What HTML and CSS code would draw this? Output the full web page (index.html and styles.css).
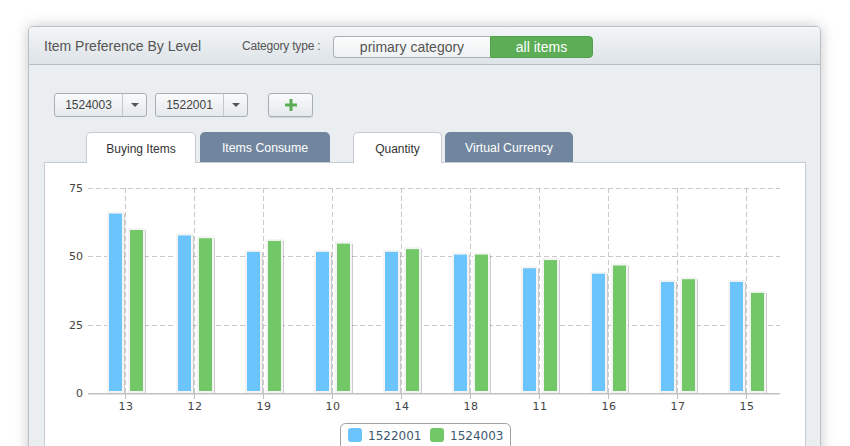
FILE: index.html
```html
<!DOCTYPE html>
<html>
<head>
<meta charset="utf-8">
<link rel="stylesheet" href="styles.css">
</head>
<body>
<div class="panel">
  <div class="header">
    <div class="title">Item Preference By Level</div>
    <div class="cat-label">Category type&nbsp;:</div>
    <div class="seg">
      <div class="seg-btn">primary category</div>
      <div class="seg-btn active">all items</div>
    </div>
  </div>
  <div class="body">
    <div class="controls">
      <div class="dropdown"><span class="dd-text">1524003</span><span class="dd-arrow"></span></div>
      <div class="dropdown"><span class="dd-text">1522001</span><span class="dd-arrow"></span></div>
      <div class="add-btn">
        <svg width="14" height="14" viewBox="0 0 14 14"><rect x="5.5" y="1" width="3" height="12" fill="#5aad55"/><rect x="1" y="5.5" width="12" height="3" fill="#5aad55"/></svg>
      </div>
    </div>
    <div class="tabs">
      <div class="tab on">Buying Items</div>
      <div class="tab off">Items Consume</div>
      <div class="tab on second">Quantity</div>
      <div class="tab off">Virtual Currency</div>
    </div>
    <div class="chart-box">
      <svg class="chart" width="760" height="300" viewBox="0 0 760 300">
        <g stroke="#c8c8c8" stroke-width="1" stroke-dasharray="5,3" fill="none">
          <line x1="43" y1="25.5" x2="735" y2="25.5"/>
          <line x1="43" y1="93.5" x2="735" y2="93.5"/>
          <line x1="43" y1="162.5" x2="735" y2="162.5"/>
          <line x1="80.5" y1="25" x2="80.5" y2="230"/>
          <line x1="149.5" y1="25" x2="149.5" y2="230"/>
          <line x1="218.5" y1="25" x2="218.5" y2="230"/>
          <line x1="287.5" y1="25" x2="287.5" y2="230"/>
          <line x1="356.5" y1="25" x2="356.5" y2="230"/>
          <line x1="425.5" y1="25" x2="425.5" y2="230"/>
          <line x1="494.5" y1="25" x2="494.5" y2="230"/>
          <line x1="563.5" y1="25" x2="563.5" y2="230"/>
          <line x1="632.5" y1="25" x2="632.5" y2="230"/>
          <line x1="701.5" y1="25" x2="701.5" y2="230"/>
        </g>
        <g id="bars"></g>
        <line x1="43" y1="230.5" x2="735" y2="230.5" stroke="#c0c0c0" stroke-width="1"/>
        <line x1="43" y1="231.5" x2="735" y2="231.5" stroke="#e0e0e0" stroke-width="1"/>
        <g stroke="#c0c0c0" stroke-width="1">
          <line x1="80.5" y1="231" x2="80.5" y2="236"/>
          <line x1="149.5" y1="231" x2="149.5" y2="236"/>
          <line x1="218.5" y1="231" x2="218.5" y2="236"/>
          <line x1="287.5" y1="231" x2="287.5" y2="236"/>
          <line x1="356.5" y1="231" x2="356.5" y2="236"/>
          <line x1="425.5" y1="231" x2="425.5" y2="236"/>
          <line x1="494.5" y1="231" x2="494.5" y2="236"/>
          <line x1="563.5" y1="231" x2="563.5" y2="236"/>
          <line x1="632.5" y1="231" x2="632.5" y2="236"/>
          <line x1="701.5" y1="231" x2="701.5" y2="236"/>
        </g>
        <g class="ylab" text-anchor="end">
          <text x="38" y="29">75</text>
          <text x="38" y="97">50</text>
          <text x="38" y="166">25</text>
          <text x="38" y="234">0</text>
        </g>
        <g class="xlab" text-anchor="middle">
          <text x="81" y="247">13</text>
          <text x="150" y="247">12</text>
          <text x="219" y="247">19</text>
          <text x="288" y="247">10</text>
          <text x="357" y="247">14</text>
          <text x="426" y="247">18</text>
          <text x="495" y="247">11</text>
          <text x="564" y="247">16</text>
          <text x="633" y="247">17</text>
          <text x="702" y="247">15</text>
        </g>
        <rect x="295.5" y="260.5" width="170" height="40" rx="5" fill="#fff" stroke="#a0a0a0"/>
        <rect x="303" y="265" width="14" height="14" rx="3" fill="#6cc4fc"/>
        <text class="leg" x="323" y="277">1522001</text>
        <rect x="385" y="265" width="14" height="14" rx="3" fill="#72c866"/>
        <text class="leg" x="405" y="277">1524003</text>
      </svg>
    </div>
  </div>
</div>
<script src="chart.js"></script>
</body>
</html>
```
FILE: chart.js
```js
(function(){
  var data=[[66,60],[58,57],[52,56],[52,55],[52,53],[51,51],[46,49],[44,47],[41,42],[41,37]];
  var g=document.getElementById('bars');
  var ns='http://www.w3.org/2000/svg';
  var base=230, scale=205/75;
  function bar(x,v,color){
    var h=v*scale, y=base-h;
    var s=document.createElementNS(ns,'rect');
    s.setAttribute('x',x+2);s.setAttribute('y',y+1);s.setAttribute('width',16);s.setAttribute('height',h-1);
    s.setAttribute('fill','rgba(0,0,0,0.2)');g.appendChild(s);
    var r=document.createElementNS(ns,'rect');
    r.setAttribute('x',x+1);r.setAttribute('y',y);r.setAttribute('width',15);r.setAttribute('height',h-1);
    r.setAttribute('fill',color);r.setAttribute('stroke','#f4f4f4');r.setAttribute('stroke-width','2');
    g.appendChild(r);
  }
  for(var i=0;i<data.length;i++){
    var c=80+69*i;
    bar(c-18,data[i][0],'#6cc4fc');
    bar(c+3,data[i][1],'#72c866');
  }
})();
```
FILE: styles.css
```css
html, body { margin: 0; padding: 0; background: #fff; }
body { font-family: "Liberation Sans", Arial, sans-serif; }
.panel {
  margin: 26px 0 0 28px;
  width: 791px;
  height: 460px;
  border: 1px solid #b9c0c7;
  border-radius: 5px;
  background: #eaeef1;
  box-shadow: 0 0 14px rgba(0,0,0,0.22);
  overflow: hidden;
}
.header {
  height: 36px;
  border-bottom: 1px solid #b5bdc5;
  background: linear-gradient(#f4f6f8, #dde3e7);
  display: flex;
  align-items: center;
  padding-left: 15px;
  padding-top: 1px;
  box-sizing: content-box;
}
.title { font-size: 14px; color: #555; width: 198px; }
.cat-label { font-size: 12px; color: #555; letter-spacing: -0.2px; width: 91px; }
.seg { display: flex; height: 22px; margin-top: 1px; }
.seg-btn {
  font-size: 14px; color: #555; display: flex; align-items: center; justify-content: center;
  border: 1px solid #a9b0b7; border-right: none;
  background: linear-gradient(#fbfcfc, #eef1f3);
  width: 156px; border-radius: 4px 0 0 4px;
}
.seg-btn.active {
  background: #5cad56; color: #fff; border: 1px solid #53a04d;
  width: 101px; border-radius: 0 4px 4px 0;
}
.body { padding: 28px 14px 0 15px; }
.controls { display: flex; padding-left: 10px; height: 24px; }
.dropdown {
  width: 91px; height: 22px; border: 1px solid #a8afb6; border-radius: 3px;
  background: linear-gradient(#f9fafb, #e5e9ec);
  display: flex; align-items: center; margin-right: 8px; font-size: 12px; color: #444;
}
.dd-text { width: 67px; text-align: center; border-right: 1px solid #c2c8cd; height: 22px; line-height: 22px; }
.dd-arrow {
  width: 0; height: 0; margin-left: 8px;
  border-left: 4px solid transparent; border-right: 4px solid transparent; border-top: 4px solid #555;
}
.add-btn {
  width: 43px; height: 22px; margin-left: 12px; border: 1px solid #a8afb6; border-radius: 3px;
  background: linear-gradient(#f9fafb, #e5e9ec);
  display: flex; align-items: center; justify-content: center;
  box-shadow: 0 1px 1px rgba(0,0,0,0.12);
}
.tabs { display: flex; padding-left: 42px; margin-top: 15px; height: 30px; align-items: flex-end; }
.tab {
  height: 30px; box-sizing: border-box; display: flex; align-items: center; justify-content: center;
  font-size: 12px; border-radius: 5px 5px 0 0; margin-right: 4px; padding-top: 1px;
}
.tab.on { background: #fff; color: #333; border: 1px solid #c6ccd1; border-bottom: none; height: 31px; margin-bottom: -1px; position: relative; }
.tab.on:first-child { width: 110px; }
.tab.second { width: 89px; margin-left: 19px; margin-right: 3px; }
.tab.off { background: #71869e; color: #fff; font-size: 12.3px; }
.tab.off:nth-child(2) { width: 130px; }
.tab.off:nth-child(4) { width: 128px; }
.chart-box { background: #fff; border: 1px solid #c6ccd1; height: 300px; }
.chart { display: block; }
.ylab text, .xlab text { font-family: "DejaVu Sans", Verdana, sans-serif; font-size: 11px; fill: #444; }
.xlab text { letter-spacing: 0.6px; }
.leg { font-family: "DejaVu Sans", Verdana, sans-serif; font-size: 12px; fill: #3e576f; }
```
